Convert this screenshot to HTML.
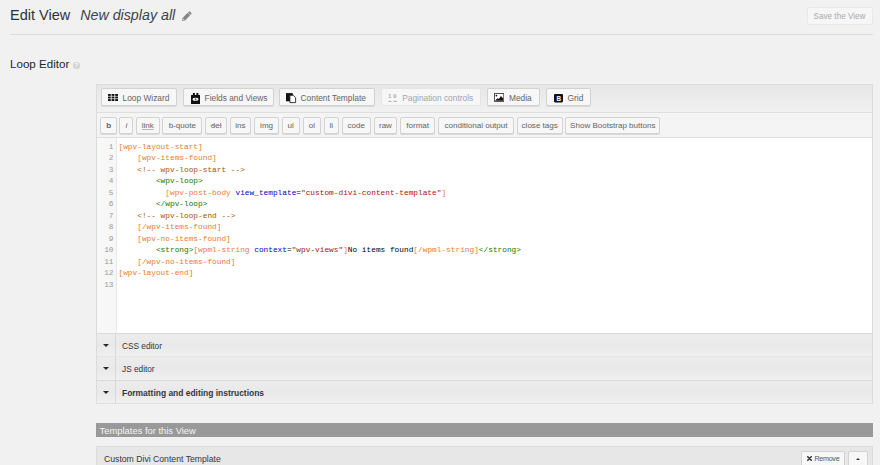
<!DOCTYPE html>
<html><head><meta charset="utf-8">
<style>
*{box-sizing:border-box;margin:0;padding:0}
html,body{width:880px;height:465px;overflow:hidden;background:#f1f1f1;font-family:"Liberation Sans",sans-serif;color:#23282d}
.a{position:absolute}
#title{left:10px;top:4px;font-size:14.5px;line-height:22px;color:#2c3338;white-space:nowrap}
#title i{font-size:14.25px;margin-left:10px;color:#3c434a}
#hr{left:10px;top:34px;width:863px;height:1px;background:#dcdcdc}
#save{left:806.5px;top:7px;width:66px;height:17.5px;border:1px solid #e8e8e8;background:#f6f6f6;border-radius:2px;font-size:8.15px;color:#a7aaad;text-align:center;line-height:18.2px}
#le{left:10px;top:56.9px;font-size:11.6px;line-height:14px;color:#23282d}
#help{left:73px;top:61.6px;width:7px;height:7px;border-radius:50%;background:#d3d3d3;color:#fff;font-size:5.5px;line-height:7px;text-align:center;font-weight:bold}
#box{left:96px;top:84px;width:777px;height:320px;border:1px solid #dcdcdc;border-bottom-color:#e0e0e0;background:#fff}
#tb1{left:0;top:0;width:775px;height:28px;background:linear-gradient(#e6e6e6,#f1f1f1);border-bottom:1px solid #dedede}
#tb2{left:0;top:28px;width:775px;height:25px;background:#f4f4f4;border-bottom:1px solid #dedede}
.btn{position:absolute;border:1px solid #d2d2d2;background:#f7f7f7;border-radius:2px;box-shadow:0 1px 0 #dadada;color:#646464;white-space:nowrap}
.b1{top:3.3px;height:17.5px;font-size:8.35px}
.b1 .t1{position:absolute;left:20.6px;top:4px;line-height:10px}
.b1 .ic{position:absolute}
.dis{border-color:#e5e5e5;box-shadow:none;color:#a0a5aa}
.b2{top:3.5px;height:17.2px;font-size:8.05px;line-height:16.6px;text-align:center}
.b2 u{text-decoration:underline;text-decoration-color:#b5b5b5}
.b2 s{text-decoration:line-through;text-decoration-color:#a0a0a0}
.b2 b{font-weight:bold}
#code{left:0;top:53px;width:775px;height:195px;background:#fff;overflow:hidden}
#gut{left:0;top:0;width:20px;height:195px;background:#f7f7f7;border-right:1px solid #e8e8e8}
.ln{position:absolute;left:0;width:16.5px;text-align:right;font-family:"Liberation Mono",monospace;font-size:7.77px;color:#999;line-height:11.49px}
.cl{position:absolute;left:21.5px;font-family:"Liberation Mono",monospace;font-size:7.8px;line-height:11.49px;white-space:pre;color:#000}
.sc{color:#ec7a30}.cm{color:#a50}.tg{color:#170}.at{color:#00c}.st{color:#a11}
.row{position:absolute;left:0;width:775px;background:linear-gradient(#ececec,#e9e9e9 50%,#f0f0f0);border-top:1px solid #dadada}
.r2{border-top-color:#e5e5e5}
.row .arr{position:absolute;left:0;top:0;width:19px;height:100%;border-right:1px solid #d8d8d8}
.row .tri{position:absolute;left:5.5px;top:9.8px;width:0;height:0;border-left:3.6px solid transparent;border-right:3.6px solid transparent;border-top:3.9px solid #23282d}
.row .t{position:absolute;left:25px;top:7px;line-height:12px;font-size:8.27px;color:#32373c;white-space:nowrap}
#thead{left:96px;top:423px;width:777px;height:14px;background:#999;color:#f4f4f4;font-size:9.4px;line-height:15.2px;padding-left:3.6px}
#tbox{left:96px;top:446px;width:777px;height:30px;border:1px solid #dcdcdc;background:#e7e7e7}
#tname{left:7px;top:6.2px;font-size:8.67px;line-height:12px;color:#32373c;white-space:nowrap}
#rm{left:703.8px;top:3.8px;width:44.2px;height:20px;font-size:7.2px;letter-spacing:-0.3px;color:#555;line-height:14px}
#rm .x{position:absolute;left:5.2px;top:4.2px}
#rm .rt{position:absolute;left:12.6px;top:0}
#up{left:750.8px;top:3.8px;width:20.2px;height:20px}
.utri{position:absolute;left:6.8px;top:6.2px;width:0;height:0;border-left:2.6px solid transparent;border-right:2.6px solid transparent;border-bottom:2.9px solid #333}

.r3 .t{top:6px}
.r3 .t b{font-size:8.45px}

</style></head><body>
<div class="a" id="title">Edit View<i>New display all</i></div>
<svg class="a" style="left:180.8px;top:10.5px" width="11.5" height="10.5" viewBox="0 0 11.5 10.5"><g transform="rotate(-45 5.75 5.25)"><rect x="1.6" y="3.5" width="7.2" height="3.5" fill="#858585"/><path d="M1.6 3.5 L-1 5.25 L1.6 7 Z" fill="#858585"/><path d="M1.3 4.5 L0 5.25 L1.3 6 Z" fill="#e8e8e8"/><rect x="9.3" y="3.5" width="2" height="3.5" rx="0.6" fill="#858585"/></g></svg>
<div class="a" id="hr"></div>
<div class="a" id="save">Save the View</div>
<div class="a" id="le">Loop Editor</div>
<div class="a" id="help">?</div>
<div class="a" id="box">
 <div class="a" id="tb1">
<div class="btn b1" style="left:4px;width:76.0px"><svg class="ic" style="left:5.7px;top:5.0px" width="10" height="7" viewBox="0 0 10 7"><g fill="#111"><rect x="0" y="0" width="2.8" height="1.9"/><rect x="3.6" y="0" width="2.8" height="1.9"/><rect x="7.2" y="0" width="2.8" height="1.9"/><rect x="0" y="2.55" width="2.8" height="1.9"/><rect x="3.6" y="2.55" width="2.8" height="1.9"/><rect x="7.2" y="2.55" width="2.8" height="1.9"/><rect x="0" y="5.1" width="2.8" height="1.9"/><rect x="3.6" y="5.1" width="2.8" height="1.9"/><rect x="7.2" y="5.1" width="2.8" height="1.9"/></g></svg><span class="t1">Loop Wizard</span></div>
<div class="btn b1" style="left:86px;width:91.0px"><svg class="ic" style="left:7px;top:3.6px" width="9.2" height="11.3" viewBox="0 0 9.2 11.3"><rect x="0" y="1.9" width="9.2" height="9.4" rx="0.4" fill="#111"/><rect x="1.9" y="0" width="2" height="2.6" fill="#111"/><rect x="5.4" y="0" width="2" height="2.6" fill="#111"/><ellipse cx="4.6" cy="6.2" rx="3" ry="1.5" fill="#fff"/><circle cx="4.6" cy="6.2" r="0.9" fill="#555"/></svg><span class="t1">Fields and Views</span></div>
<div class="btn b1" style="left:182px;width:96.2px"><svg class="ic" style="left:6px;top:3.8px" width="11" height="11" viewBox="0 0 11 11"><rect x="0" y="0.1" width="6.8" height="8.2" fill="#111"/><path d="M3.9 2.3 H7.2 L9.6 4.7 V9.6 H3.9 Z" fill="#fff" stroke="#222" stroke-width="0.9"/></svg><span class="t1">Content Template</span></div>
<div class="btn b1 dis" style="left:283.6px;width:100.9px"><svg class="ic" style="left:6px;top:3.5px" width="9.5" height="9.5" viewBox="0 0 9.5 9.5"><text x="0" y="4.8" font-family="Liberation Sans" font-weight="bold" font-size="6.2" fill="#b0b0b0">1</text><text x="5" y="4.8" font-family="Liberation Sans" font-weight="bold" font-size="6.2" fill="#b0b0b0">9</text><path d="M1 8.5 H3.6 M5.4 8.5 H8.2" stroke="#b0b0b0" stroke-width="0.9"/><path d="M0 8.5 L1.7 7.3 V9.5 Z M9.2 8.5 L7.5 7.3 V9.5 Z" fill="#b0b0b0"/></svg><span class="t1">Pagination controls</span></div>
<div class="btn b1" style="left:390.4px;width:53.1px"><svg class="ic" style="left:5.6px;top:4.1px" width="10.2" height="8.9" viewBox="0 0 10.2 8.9"><rect x="0.45" y="0.45" width="9.3" height="8" fill="#fff" stroke="#444" stroke-width="0.9"/><circle cx="2.4" cy="2.6" r="0.9" fill="#111"/><path d="M1 7.7 L3.5 5.2 L4.8 6 L7 3.1 L9.2 5.6 V7.7 Z" fill="#111"/></svg><span class="t1">Media</span></div>
<div class="btn b1" style="left:449px;width:45.0px"><svg class="ic" style="left:7.2px;top:4.9px" width="9" height="8.4" viewBox="0 0 9 8.4"><rect x="0" y="0" width="9" height="8.4" rx="1.1" fill="#111"/><text x="2.4" y="6.6" font-family="Liberation Sans" font-weight="bold" font-size="6.4" fill="#fff">B</text></svg><span class="t1">Grid</span></div>
 </div>
 <div class="a" id="tb2">
<div class="btn b2" style="left:3.4px;width:16.4px"><b>b</b></div>
<div class="btn b2" style="left:22.4px;width:14.0px"><i>i</i></div>
<div class="btn b2" style="left:39px;width:23.6px"><u>link</u></div>
<div class="btn b2" style="left:65.4px;width:39.9px">b-quote</div>
<div class="btn b2" style="left:108.4px;width:21.7px"><s>del</s></div>
<div class="btn b2" style="left:132.8px;width:21.3px">ins</div>
<div class="btn b2" style="left:157px;width:25.2px">img</div>
<div class="btn b2" style="left:184.5px;width:18.3px">ul</div>
<div class="btn b2" style="left:205.6px;width:18.4px">ol</div>
<div class="btn b2" style="left:226.6px;width:15.5px">li</div>
<div class="btn b2" style="left:245px;width:28.6px">code</div>
<div class="btn b2" style="left:276.7px;width:23.5px">raw</div>
<div class="btn b2" style="left:303.3px;width:34.7px">format</div>
<div class="btn b2" style="left:341px;width:76.0px">conditional output</div>
<div class="btn b2" style="left:419.8px;width:45.8px">close tags</div>
<div class="btn b2" style="left:468.4px;width:94.8px">Show Bootstrap buttons</div>
 </div>
 <div class="a" id="code">
  <div class="a" id="gut"></div>
<div class="ln" style="top:3.80px">1</div>
<div class="ln" style="top:15.29px">2</div>
<div class="ln" style="top:26.78px">3</div>
<div class="ln" style="top:38.27px">4</div>
<div class="ln" style="top:49.76px">5</div>
<div class="ln" style="top:61.25px">6</div>
<div class="ln" style="top:72.74px">7</div>
<div class="ln" style="top:84.23px">8</div>
<div class="ln" style="top:95.72px">9</div>
<div class="ln" style="top:107.21px">10</div>
<div class="ln" style="top:118.70px">11</div>
<div class="ln" style="top:130.19px">12</div>
<div class="ln" style="top:141.68px">13</div>
<div class="cl" style="top:3.80px"><span class="sc">[wpv-layout-start]</span></div>
<div class="cl" style="top:15.29px">    <span class="sc">[wpv-items-found]</span></div>
<div class="cl" style="top:26.78px">    <span class="cm">&lt;!-- wpv-loop-start --&gt;</span></div>
<div class="cl" style="top:38.27px">        <span class="tg">&lt;wpv-loop&gt;</span></div>
<div class="cl" style="top:49.76px">          <span class="sc">[wpv-post-body</span> <span class="at">view_template</span>=<span class="st">"custom-divi-content-template"</span><span class="sc">]</span></div>
<div class="cl" style="top:61.25px">        <span class="tg">&lt;/wpv-loop&gt;</span></div>
<div class="cl" style="top:72.74px">    <span class="cm">&lt;!-- wpv-loop-end --&gt;</span></div>
<div class="cl" style="top:84.23px">    <span class="sc">[/wpv-items-found]</span></div>
<div class="cl" style="top:95.72px">    <span class="sc">[wpv-no-items-found]</span></div>
<div class="cl" style="top:107.21px">        <span class="tg">&lt;strong&gt;</span><span class="sc">[wpml-string</span> <span class="at">context</span>=<span class="st">"wpv-views"</span><span class="sc">]</span>No items found<span class="sc">[/wpml-string]</span><span class="tg">&lt;/strong&gt;</span></div>
<div class="cl" style="top:118.70px">    <span class="sc">[/wpv-no-items-found]</span></div>
<div class="cl" style="top:130.19px"><span class="sc">[wpv-layout-end]</span></div>
<div class="cl" style="top:141.68px"></div>
 </div>
 <div class="row" style="top:248px;height:23px"><div class="arr"></div><div class="tri"></div><div class="t">CSS editor</div></div>
 <div class="row r2" style="top:271px;height:24px"><div class="arr"></div><div class="tri"></div><div class="t">JS editor</div></div>
 <div class="row r3" style="top:295px;height:23px"><div class="arr"></div><div class="tri"></div><div class="t"><b>Formatting and editing instructions</b></div></div>
</div>
<div class="a" id="thead">Templates for this View</div>
<div class="a" id="tbox"><div class="a" id="tname">Custom Divi Content Template</div>
<div class="btn" id="rm"><svg class="x" width="5" height="5" viewBox="0 0 5 5"><path d="M0.8 0.8 L4.2 4.2 M4.2 0.8 L0.8 4.2" stroke="#333" stroke-width="1.5" stroke-linecap="square"/></svg><span class="rt">Remove</span></div>
<div class="btn" id="up"><div class="utri"></div></div>
</div>
</body></html>
